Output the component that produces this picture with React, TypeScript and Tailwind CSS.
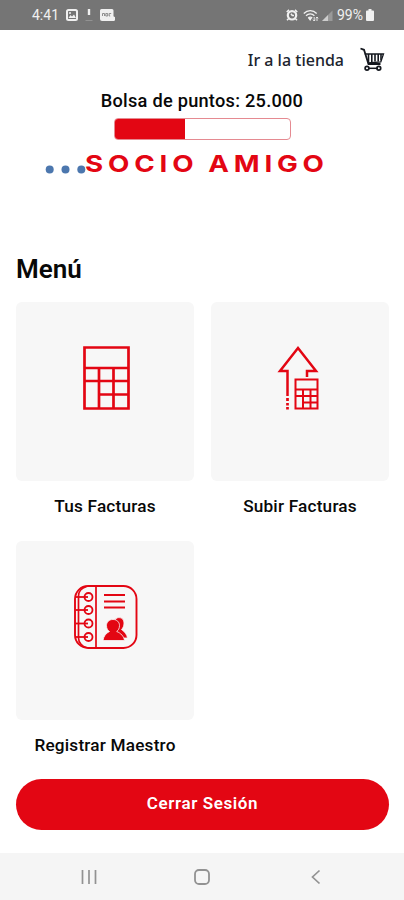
import type { ReactNode } from "react";

const RED = "#e30613";

function StatusBar() {
  return (
    <header className="flex h-[30px] shrink-0 items-center justify-between bg-[#757575] pl-8 pr-[30px] text-[#f0f0f0]">
      <div className="flex items-center">
        <span className="w-[34px] font-['Roboto',sans-serif] text-[14px] leading-none">4:41</span>
        <svg width="12" height="12" viewBox="0 0 12 12">
          <rect x="1" y="1" width="10" height="10" rx="1.5" fill="none" stroke="currentColor" strokeWidth="2" />
          <path d="M2.5 9 4.5 6l1.5 1.5L8 5.5 10 9Z" fill="currentColor" />
          <circle cx="4" cy="4" r="1" fill="currentColor" />
        </svg>
        <svg className="ml-[7px]" width="8" height="14" viewBox="0 0 8 14">
          <path d="M4 1v6" stroke="currentColor" strokeWidth="2.4" />
          <path d="M.5 12.500h7" stroke="currentColor" strokeWidth="0.8" opacity="0.3" />
        </svg>
        <svg className="ml-[7px]" width="15" height="12" viewBox="0 0 15 12">
          <path d="M1.5 0h10.500a1.500 1.500 0 0 1 1.500 1.500V7.500A2.200 2.200 0 0 1 12.500 12H2a2 2 0 0 1-2-2V1.500A1.500 1.500 0 0 1 1.500 0Z" fill="currentColor" />
          <circle cx="12.700" cy="9.500" r="2.100" fill="currentColor" />
          <path d="M2.500 7V4.500h2V7m1.300-2.500h1.900V7H5.800ZM9.200 4.500h2M9.200 4.500V7h1" fill="none" stroke="#858585" strokeWidth="0.9" />
        </svg>
      </div>
      <div className="flex items-center">
        <svg width="12" height="12" viewBox="0 0 12 12">
          <circle cx="6" cy="6.300" r="4.200" fill="none" stroke="currentColor" strokeWidth="2.200" />
          <path d="M.7 3 3 .9M9 .9 11.300 3M1 11.300l2-2M11 11.300l-2-2M5 4.800l1.300 1.700H8" fill="none" stroke="currentColor" strokeWidth="1.500" />
        </svg>
        <svg className="ml-[5px]" width="16" height="13" viewBox="0 0 16 13">
          <path d="M.8 4.500C4.500.7 10 .7 13.700 4.500M3 6.800c2.500-2.500 6-2.500 8.400 0M5.200 9c1.400-1.300 2.800-1.300 4 0" fill="none" stroke="currentColor" strokeWidth="1.300" />
          <path d="M7.200 12 5 9h4Z" fill="currentColor" />
          <path d="M11.200 8v4m-1.200-1.300 1.200 1.300 1.200-1.300M14 12V8m-1.200 1.300L14 8l1.200 1.300" fill="none" stroke="currentColor" strokeWidth="0.9" />
        </svg>
        <svg className="ml-[3px]" width="11" height="11" viewBox="0 0 11 11">
          <path d="M0 11 10.500.5V11Z" fill="currentColor" opacity="0.300" />
          <path d="M0 11 6 5v6Z" fill="currentColor" opacity="0.600" />
        </svg>
        <span className="ml-1 w-[29px] font-['Roboto',sans-serif] text-[14px] leading-none">99%</span>
        <svg width="8" height="12" viewBox="0 0 8 12">
          <path d="M2.500 0h3v1.500H7a1 1 0 0 1 1 1V11a1 1 0 0 1-1 1H1a1 1 0 0 1-1-1V2.500a1 1 0 0 1 1-1h1.500Z" fill="currentColor" />
        </svg>
      </div>
    </header>
  );
}

function CartIcon() {
  return (
    <svg width="25" height="25" viewBox="0 0 25 25" fill="none" stroke="#15181f">
      <path d="M.5 1.500 4 2.800 8.500 17h12" strokeWidth="1.800" />
      <path d="M4.800 7h18.700l-2.700 8-13 1" strokeWidth="1.300" />
      <path d="M8.500 7v8M11.800 7v8M15 7v7.500M18.200 7v7.500M21 7v6.500" strokeWidth="1.600" />
      <path d="M8 21.300h10" strokeWidth="1.500" />
      <circle cx="7" cy="21.300" r="1.900" strokeWidth="1.700" />
      <circle cx="18.800" cy="21.300" r="1.900" strokeWidth="1.700" />
    </svg>
  );
}

function Brand() {
  return (
    <svg className="mt-2 shrink-0" width="404" height="34" viewBox="0 0 404 34">
      <g fill="#4c77ae">
        <circle cx="49.700" cy="21.500" r="4" />
        <circle cx="65.500" cy="21.500" r="4" />
        <circle cx="81.300" cy="21.500" r="4" />
      </g>
      <g transform="translate(85 23.500) scale(1.180 1)" fill={RED} className="font-['Inter',sans-serif] text-[23.500px] font-bold">
        <text x="0" y="0" textLength="92" lengthAdjust="spacing">SOCIO</text>
        <text x="104.500" y="0" textLength="98" lengthAdjust="spacing">AMIGO</text>
      </g>
    </svg>
  );
}

function InvoicesIcon() {
  return (
    <svg className="ml-0.5" width="47" height="65" viewBox="0 0 47 65" fill="none" stroke={RED} strokeWidth="2.700">
      <path d="M1.500 2.500h44v61h-44ZM1.500 23h44M1.500 36h44M16 49.500h29.500M16 23v40.500M30.500 23v40.500" />
    </svg>
  );
}

function UploadIcon() {
  return (
    <svg className="mr-1" width="42" height="66" viewBox="0 0 42 66" fill="none" stroke={RED}>
      <path d="M10.500 51V26H3L21 3l18 23H30V32" strokeWidth="2.500" />
      <path d="M10.500 53v3M10.500 58v2.500M10.500 62v2.500" strokeWidth="2.700" />
      <path d="M18.500 34.500h22v29h-22ZM18.500 44.500h22M18.500 51h22M26 57.500h15M26 44.500v19M33.500 44.500v19" strokeWidth="2" />
    </svg>
  );
}

function RegisterIcon() {
  const rings = [12, 25, 38.5, 52];
  return (
    <svg className="mt-px ml-0.5" width="64" height="64" viewBox="0 0 64 64" fill="none" stroke={RED}>
      <rect x="1" y="1" width="61.500" height="62" rx="13" strokeWidth="1.900" />
      <path d="M4.500 11v42c0 5 4 8.500 8 9.500M4.500 11c0-4 3-8 8-9.500M22 1.500v61" strokeWidth="1.700" />
      {rings.map((y) => (
        <g key={y} strokeWidth="1.800">
          <circle cx="14.500" cy={y} r="4" />
          <path d={`M2 ${y}h12`} />
        </g>
      ))}
      <path d="M30 10h21M30 16.500h21M30 22.500h21" strokeWidth="1.900" />
      <g fill={RED} stroke="#f7f7f7" strokeWidth="0.800">
        <path d="M41 35c2-4 9-3 9 3 0 3-1 5-2.500 6.500 3 2 5.500 5 6 8.500h-10Z" />
        <path d="M39 34.500c4 0 6.500 2.700 6.500 6 0 3-1.200 4.800-2.800 6 4 1.500 7.300 5 7.800 9H29c.5-4 3-7.500 6.500-9-1.800-1.200-3-3-3-6 0-3.300 2.500-6 6.500-6Z" />
      </g>
    </svg>
  );
}

function MenuCard({ label, children }: { label: string; children: ReactNode }) {
  return (
    <button className="flex flex-col items-center">
      <span className="flex h-[179px] w-full justify-center rounded-md bg-[#f7f7f7] pt-[43px]">{children}</span>
      <span className="mt-[13px] pt-px font-['Roboto',sans-serif] text-[17.200px] font-medium leading-[23px] tracking-[0.2px] text-[#080808]">
        {label}
      </span>
    </button>
  );
}

function NavigationBar() {
  return (
    <nav className="mt-auto flex h-[47px] items-center bg-[#f5f5f5] text-[#929292]">
      <svg className="ml-[81px]" width="16" height="16" viewBox="0 0 16 16" fill="none" stroke="currentColor" strokeWidth="1.700">
        <path d="M1.500 1v14M8 1v14M14.500 1v14" />
      </svg>
      <svg className="ml-[97px]" width="16" height="16" viewBox="0 0 16 16" fill="none" stroke="currentColor" strokeWidth="1.800">
        <rect x="1" y="1" width="14" height="14" rx="4" />
      </svg>
      <svg className="ml-[101px]" width="10" height="16" viewBox="0 0 10 16" fill="none" stroke="currentColor" strokeWidth="1.700">
        <path d="M8.500 1.500 1.500 8l7 6.500" />
      </svg>
    </nav>
  );
}

export default function App() {
  return (
    <div className="flex h-[900px] w-[404px] flex-col overflow-hidden bg-white">
      <StatusBar />

      {/* Store link */}
      <div className="flex h-[59px] items-center justify-end pr-[19px]">
        <span className="font-['Noto_Sans',sans-serif] text-[16px] font-medium text-[#20242e]">Ir a la tienda</span>
        <span className="ml-4"><CartIcon /></span>
      </div>

      {/* Points */}
      <div className="flex flex-col items-center">
        <p className="font-['Roboto',sans-serif] text-[18.200px] font-medium leading-6 tracking-[0.25px] text-[#080808]">Bolsa de puntos: 25.000</p>
        <div className="mt-[5px] h-[22px] w-[177px] overflow-hidden rounded-[4px] border border-[#e58a91]">
          <div className="h-full w-[40%] bg-[#e30613]" />
        </div>
      </div>

      <Brand />

      <main className="pl-4 pr-[15px] pt-[70px]">
        <h1 className="font-['Roboto',sans-serif] text-[26px] font-semibold leading-[34px] text-[#080808]">Menú</h1>
        <div className="mt-4 grid grid-cols-2 gap-x-[17px] gap-y-[23px]">
          <MenuCard label="Tus Facturas"><InvoicesIcon /></MenuCard>
          <MenuCard label="Subir Facturas"><UploadIcon /></MenuCard>
          <MenuCard label="Registrar Maestro"><RegisterIcon /></MenuCard>
        </div>
        <button className="mt-[22px] h-[51px] w-full rounded-full bg-[#e30613] pb-0.5 font-['Roboto',sans-serif] text-[17px] font-semibold tracking-[0.600px] text-white">
          Cerrar Sesión
        </button>
      </main>

      <NavigationBar />
    </div>
  );
}
